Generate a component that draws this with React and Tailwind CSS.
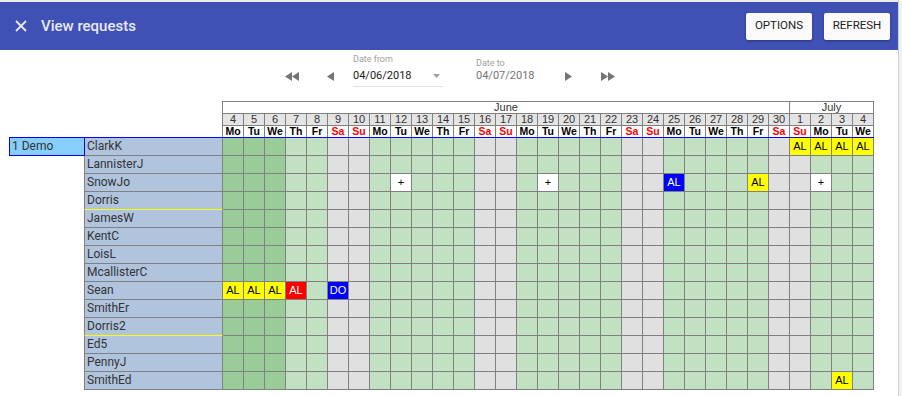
import React from "react";

const WD = ["Mo", "Tu", "We", "Th", "Fr", "Sa", "Su"];
const DAYS = [];
for (let d = 4; d <= 30; d++) DAYS.push(d);
for (let d = 1; d <= 4; d++) DAYS.push(d);

const Y = { t: "AL", cls: "bg-[#ffff00] text-black" };
const R = { t: "AL", cls: "bg-[#ff0000] text-white" };
const B = { t: "AL", cls: "bg-[#0000ff] text-white" };
const DO = { t: "DO", cls: "bg-[#0000ff] text-white" };
const P = { t: "+", cls: "bg-white text-black" };

const ROWS = [
  { name: "ClarkK", cells: { 27: Y, 28: Y, 29: Y, 30: Y } },
  { name: "LannisterJ" },
  { name: "SnowJo", cells: { 8: P, 15: P, 21: B, 25: Y, 28: P } },
  { name: "Dorris", yellow: true },
  { name: "JamesW" },
  { name: "KentC" },
  { name: "LoisL" },
  { name: "McallisterC" },
  { name: "Sean", cells: { 0: Y, 1: Y, 2: Y, 3: R, 5: DO } },
  { name: "SmithEr" },
  { name: "Dorris2", yellow: true },
  { name: "Ed5" },
  { name: "PennyJ" },
  { name: "SmithEd", cells: { 29: Y } },
];

function cellBg(i) {
  if (i % 7 >= 5) return "bg-[#e0e0e0]";
  if (i < 3) return "bg-[#99cc99]";
  return "bg-[#c2e0c2]";
}

function Tri({ dir = "left", double = false }) {
  const w = double ? 14 : 8;
  const one = (x) =>
    dir === "left"
      ? `M${x + 7} 0 L${x} 4.5 L${x + 7} 9 Z`
      : `M${x} 0 L${x + 7} 4.5 L${x} 9 Z`;
  return (
    <svg width={w} height="9" viewBox={`0 0 ${w} 9`} className="fill-[#757575]">
      <path d={one(0)} />
      {double && <path d={one(7)} />}
    </svg>
  );
}

export default function App() {
  return (
    <div className="flex w-[902px] h-[396px] bg-white font-['Roboto',sans-serif] overflow-hidden">
      <div className="w-[898px] border-t-2 border-[#eeeeee]">
        {/* Top bar */}
        <div className="h-[48px] bg-[#3f51b5] flex items-center pl-[15px] pr-[8px]">
          <svg width="12" height="12" viewBox="0 0 12 12" className="stroke-[#e8eaf6]">
            <path d="M1 1 L11 11 M11 1 L1 11" strokeWidth="1.8" />
          </svg>
          <span className="ml-[14px] text-[15px] font-medium text-[#e8eaf6]">View requests</span>
          <div className="ml-auto flex gap-[12px]">
            <button className="h-[27px] w-[66px] bg-[#fafafa] rounded-[2px] shadow-[0_1px_3px_rgba(0,0,0,0.35)] text-[11.5px] font-normal text-[#212121]">
              OPTIONS
            </button>
            <button className="h-[27px] w-[66px] bg-[#fafafa] rounded-[2px] shadow-[0_1px_3px_rgba(0,0,0,0.35)] text-[11.5px] font-normal text-[#212121]">
              REFRESH
            </button>
          </div>
        </div>

        {/* Date controls */}
        <div className="h-[51px] flex pl-[285px]">
          <div className="pt-[22px]"><Tri dir="left" double /></div>
          <div className="pt-[22px] ml-[28px]"><Tri dir="left" /></div>
          <div className="ml-[18px] w-[90px] flex flex-col pt-[3px]">
            <span className="text-[9px] leading-[12px] text-[#9e9e9e]">Date from</span>
            <div className="mt-[3px] flex items-center border-b border-[#e0e0e0] pb-[2px]">
              <span className="text-[11px] leading-[16px] text-[#212121]">04/06/2018</span>
              <svg width="7" height="4" viewBox="0 0 7 4" className="ml-auto mr-[3px] fill-[#9e9e9e]">
                <path d="M0 0 L7 0 L3.5 4 Z" />
              </svg>
            </div>
          </div>
          <div className="ml-[33px] w-[80px] flex flex-col pt-[8px]">
            <span className="text-[9px] leading-[10px] text-[#9e9e9e]">Date to</span>
            <span className="text-[11px] leading-[16px] text-[#757575]">04/07/2018</span>
          </div>
          <div className="pt-[22px] ml-[9px]"><Tri dir="right" /></div>
          <div className="pt-[22px] ml-[28px]"><Tri dir="right" double /></div>
        </div>

        {/* Grid header */}
        <div className="ml-[222px] w-fit grid grid-cols-[repeat(31,20px)] gap-px bg-[#808080] border-t border-x border-[#808080] font-['Liberation_Sans',Arial,sans-serif] text-[11px] leading-[11px]">
          <div className="col-span-27 bg-white text-center text-[#333]">June</div>
          <div className="col-span-4 bg-white text-center text-[#333]">July</div>
          {DAYS.map((d, i) => (
            <div key={"n" + i} className="bg-[#e4e4e4] text-center text-[#333]">{d}</div>
          ))}
          {DAYS.map((d, i) => (
            <div
              key={"w" + i}
              className={`bg-white text-center font-bold text-[10.5px] ${i % 7 >= 5 ? "text-[#ff0000]" : "text-black"}`}
            >
              {WD[i % 7]}
            </div>
          ))}
        </div>

        {/* Body */}
        <div className="ml-[9px] w-fit border-t border-[#0000ff]">
          {ROWS.map((row, r) => (
            <div key={row.name} className="flex h-[18px]">
              {r === 0 ? (
                <div className="w-[76px] h-[18px] border-x border-b border-[#0000ff] bg-[#87cefa] pl-[2px] text-[12px] leading-[17px] text-[#333]">
                  1 Demo
                </div>
              ) : (
                <div className="w-[75px]" />
              )}
              <div
                className={`${r === 0 ? "w-[138px]" : "w-[139px] border-l border-l-[#808080]"} h-[18px] border-r border-r-[#808080] border-b ${row.yellow ? "border-b-[#ffff00]" : "border-b-[#808080]"} bg-[#b0c4de] pl-[2px] text-[12px] leading-[17px] text-[#333]`}
              >
                {row.name}
              </div>
              {DAYS.map((d, i) => {
                const c = row.cells && row.cells[i];
                return (
                  <div
                    key={i}
                    className={`w-[21px] h-[18px] border-r border-b border-[#808080] text-center text-[11px] leading-[17px] font-['Liberation_Sans',Arial,sans-serif] ${c ? c.cls : cellBg(i)}`}
                  >
                    {c ? c.t : ""}
                  </div>
                );
              })}
            </div>
          ))}
        </div>
      </div>
      <div className="w-[4px] border-l border-[#cfcfcf] bg-[#f1f1f1]" />
    </div>
  );
}
